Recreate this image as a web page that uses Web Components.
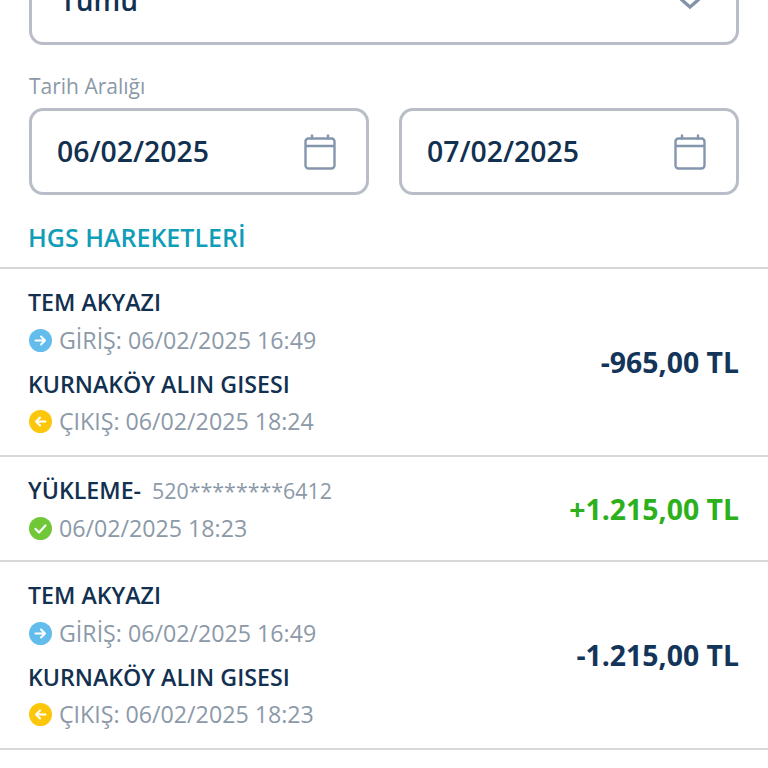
<!DOCTYPE html>
<html lang="tr">
<head>
<meta charset="utf-8">
<title>HGS Hareketleri</title>
<style>
  html, body { margin: 0; padding: 0; background: #fff; height: 768px; overflow: hidden; }
  body { font-family: "Open Sans", "Noto Sans", sans-serif; color: #12304f; }
</style>
</head>
<body>
<hgs-page>
  <select-box value="Tümü"></select-box>
  <date-range label="Tarih Aralığı">
    <date-field value="06/02/2025"></date-field>
    <date-field value="07/02/2025"></date-field>
  </date-range>
  <section-title>HGS HAREKETLERİ</section-title>
  <toll-row amount="-965,00 TL"
    entry-name="TEM AKYAZI" entry-time="GİRİŞ: 06/02/2025 16:49"
    exit-name="KURNAKÖY ALIN GISESI" exit-time="ÇIKIŞ: 06/02/2025 18:24"></toll-row>
  <topup-row amount="+1.215,00 TL" card="520********6412" time="06/02/2025 18:23"></topup-row>
  <toll-row amount="-1.215,00 TL"
    entry-name="TEM AKYAZI" entry-time="GİRİŞ: 06/02/2025 16:49"
    exit-name="KURNAKÖY ALIN GISESI" exit-time="ÇIKIŞ: 06/02/2025 18:23"></toll-row>
</hgs-page>

<script>
  // Round status icons shared by the rows
  const ICONS = {
    in: `<svg width="23" height="23" viewBox="0 0 23 23"><circle cx="11.5" cy="11.5" r="11.5" fill="#62bdec"/><path d="M6.5 11.5h9.5M12 7.5l4 4-4 4" fill="none" stroke="#fff" stroke-width="2" stroke-linecap="round" stroke-linejoin="round"/></svg>`,
    out: `<svg width="23" height="23" viewBox="0 0 23 23"><circle cx="11.5" cy="11.5" r="11.5" fill="#fcc70a"/><path d="M16.5 11.5H7M11 7.5l-4 4 4 4" fill="none" stroke="#fff" stroke-width="2" stroke-linecap="round" stroke-linejoin="round"/></svg>`,
    ok: `<svg width="23" height="23" viewBox="0 0 23 23"><circle cx="11.5" cy="11.5" r="11.5" fill="#70c738"/><path d="M6.5 12l3.5 3.5 6.5-7" fill="none" stroke="#fff" stroke-width="2.2" stroke-linecap="round" stroke-linejoin="round"/></svg>`
  };

  // Small helper so every component attaches an open root the same way
  class BaseElement extends HTMLElement {
    constructor() {
      super();
      this.attachShadow({ mode: 'open' });
    }
    attr(name) {
      return this.getAttribute(name) || '';
    }
  }

  class HgsPage extends BaseElement {
    connectedCallback() {
      this.shadowRoot.innerHTML = `
        <style>
          :host { display: flex; flex-direction: column; width: 768px; margin-top: -42px; }
        </style>
        <slot></slot>`;
    }
  }

  class SelectBox extends BaseElement {
    connectedCallback() {
      this.shadowRoot.innerHTML = `
        <style>
          :host { display: block; margin: 0 29px; }
          .box {
            box-sizing: border-box; height: 87px; display: flex; align-items: center;
            justify-content: space-between; padding: 0 36px 0 28px;
            border: 3px solid #b9bdc7; border-radius: 14px;
          }
          .value { font-size: 28px; font-weight: 600; color: #12304f; margin-bottom: 4px; }
          svg { display: block; }
        </style>
        <div class="box">
          <span class="value">${this.attr('value')}</span>
          <svg width="20" height="20" viewBox="0 0 20 20"><path d="M2 8l8-7 8 7-8 7z" fill="none" stroke="#8494a8" stroke-width="3.2"/></svg>
        </div>`;
    }
  }

  class DateRange extends BaseElement {
    connectedCallback() {
      this.shadowRoot.innerHTML = `
        <style>
          :host { display: block; margin: 27px 29px 0; }
          .label { font-size: 21px; line-height: 28px; color: #8c99a8; margin-bottom: 8px; }
          .fields { display: grid; grid-template-columns: 340px 340px; gap: 30px; }
        </style>
        <div class="label">${this.attr('label')}</div>
        <div class="fields"><slot></slot></div>`;
    }
  }

  class DateField extends BaseElement {
    connectedCallback() {
      this.shadowRoot.innerHTML = `
        <style>
          :host { display: block; }
          .box {
            box-sizing: border-box; height: 87px; display: flex; align-items: center;
            justify-content: space-between; padding: 0 30px 0 25px;
            border: 3px solid #b9bdc7; border-radius: 14px;
          }
          .value { font-size: 28.4px; font-weight: 600; color: #12304f; margin-bottom: 2px; }
          svg { display: block; }
        </style>
        <div class="box">
          <span class="value">${this.attr('value')}</span>
          <svg width="32" height="36" viewBox="0 0 32 36" fill="none" stroke="#8496ad" stroke-width="2.4">
            <rect x="1.5" y="4.5" width="29" height="30" rx="3"/>
            <path d="M1.5 12h29M8 0.5v5M24 0.5v5"/>
          </svg>
        </div>`;
    }
  }

  class SectionTitle extends BaseElement {
    connectedCallback() {
      this.shadowRoot.innerHTML = `
        <style>
          :host {
            display: block; margin-top: 24px; padding: 0 29px 12px 28px; font-size: 25px; line-height: 36px;
            font-weight: 600; color: #0f9db8; border-bottom: 2px solid #d8d8d8;
          }
        </style>
        <slot></slot>`;
    }
  }

  // Shared row styles for the two kinds of movement
  const ROW_STYLE = `
    :host {
      display: flex; align-items: center; justify-content: space-between;
      padding: 0 29px; border-bottom: 2px solid #d8d8d8;
    }
    .name { font-size: 23.2px; line-height: 30px; font-weight: 600; color: #12304f; margin-left: -1px; }
    .meta { display: flex; align-items: center; gap: 7px; font-size: 23.2px; line-height: 34px; color: #8c99a8; }
    .meta svg { flex: none; }
    .amount { font-size: 28.4px; font-weight: 700; color: #14355a; white-space: nowrap; }
  `;

  class TollRow extends BaseElement {
    connectedCallback() {
      this.shadowRoot.innerHTML = `
        <style>
          ${ROW_STYLE}
          :host { height: 186px; }
          .col { display: flex; flex-direction: column; padding-top: 1px; }
          .meta { margin-top: 6px; }
          .meta.exit { margin-top: 5px; }
          .name.exit { margin-top: 12px; }
          .amount { margin-top: 0; }
        </style>
        <div class="col">
          <div class="name">${this.attr('entry-name')}</div>
          <div class="meta">${ICONS.in}<span>${this.attr('entry-time')}</span></div>
          <div class="name exit">${this.attr('exit-name')}</div>
          <div class="meta exit">${ICONS.out}<span>${this.attr('exit-time')}</span></div>
        </div>
        <div class="amount">${this.attr('amount')}</div>`;
    }
  }

  class TopupRow extends BaseElement {
    connectedCallback() {
      this.shadowRoot.innerHTML = `
        <style>
          ${ROW_STYLE}
          :host { height: 103px; }
          .col { display: flex; flex-direction: column; padding-top: 3px; }
          .head { display: flex; align-items: baseline; gap: 11px; }
          .card { font-size: 21.4px; color: #8c99a8; }
          .meta { margin-top: 6px; }
          .amount { color: #2cb01c; }
        </style>
        <div class="col">
          <div class="head"><span class="name">YÜKLEME-</span><span class="card">${this.attr('card')}</span></div>
          <div class="meta">${ICONS.ok}<span>${this.attr('time')}</span></div>
        </div>
        <div class="amount">${this.attr('amount')}</div>`;
    }
  }

  customElements.define('hgs-page', HgsPage);
  customElements.define('select-box', SelectBox);
  customElements.define('date-range', DateRange);
  customElements.define('date-field', DateField);
  customElements.define('section-title', SectionTitle);
  customElements.define('toll-row', TollRow);
  customElements.define('topup-row', TopupRow);
</script>
</body>
</html>
